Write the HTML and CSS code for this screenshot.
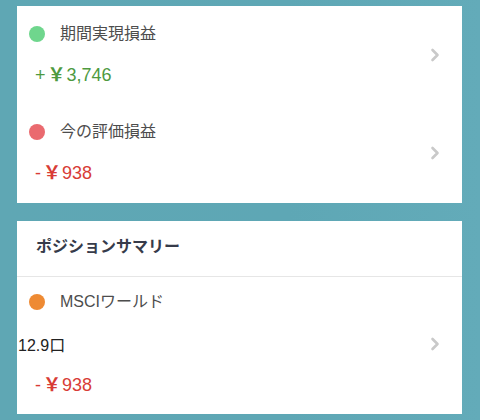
FILE: index.html
```html
<!DOCTYPE html>
<html lang="ja">
<head>
<meta charset="utf-8">
<link rel="stylesheet" href="styles.css">
</head>
<body>
<div class="card card-pl">
  <div class="row">
    <div class="info">
      <div class="label"><span class="dot dot-green"></span><span>期間実現損益</span></div>
      <div class="value plus">+<span class="yen">￥</span>3,746</div>
    </div>
    <svg class="chev" width="10" height="14" viewBox="0 0 10 14"><path d="M2.5 2 L7.5 7 L2.5 12" fill="none" stroke="#c9c9c9" stroke-width="2.6" stroke-linecap="round" stroke-linejoin="round"/></svg>
  </div>
  <div class="row">
    <div class="info">
      <div class="label"><span class="dot dot-red"></span><span>今の評価損益</span></div>
      <div class="value minus">-<span class="yen">￥</span>938</div>
    </div>
    <svg class="chev" width="10" height="14" viewBox="0 0 10 14"><path d="M2.5 2 L7.5 7 L2.5 12" fill="none" stroke="#c9c9c9" stroke-width="2.6" stroke-linecap="round" stroke-linejoin="round"/></svg>
  </div>
</div>
<div class="card card-pos">
  <div class="head">ポジションサマリー</div>
  <div class="row item">
    <div class="info">
      <div class="label"><span class="dot dot-orange"></span><span>MSCIワールド</span></div>
      <div class="qty">12.9口</div>
      <div class="value minus">-<span class="yen">￥</span>938</div>
    </div>
    <svg class="chev" width="10" height="14" viewBox="0 0 10 14"><path d="M2.5 2 L7.5 7 L2.5 12" fill="none" stroke="#c9c9c9" stroke-width="2.6" stroke-linecap="round" stroke-linejoin="round"/></svg>
  </div>
</div>
</body>
</html>
```
FILE: styles.css
```css
html, body {
  margin: 0;
  height: 100%;
}
body {
  background: linear-gradient(90deg, #5fa7b4 0%, #5ea7b5 60%, #63abb9 100%);
  padding: 6px 18px 0 17px;
  box-sizing: border-box;
  font-family: "Liberation Sans", "Noto Sans CJK JP", sans-serif;
  overflow: hidden;
}
.card {
  background: #ffffff;
}
.card-pl {
  padding-bottom: 1px;
}
.card + .card {
  margin-top: 18px;
}
.row {
  display: flex;
  align-items: center;
  padding: 18px 22px 18px 0;
}
.info {
  flex: 1;
  display: flex;
  flex-direction: column;
}
.label {
  display: flex;
  align-items: center;
  gap: 15px;
  padding-left: 12px;
  font-size: 16px;
  line-height: 20px;
  color: #4d4d4d;
}
.dot {
  width: 16px;
  height: 16px;
  border-radius: 50%;
  flex: none;
}
.dot-green { background: #6fd68d; }
.dot-red { background: #ea6a6f; }
.dot-orange { background: #ee8a33; }
.value {
  margin-top: 20px;
  padding-left: 18px;
  font-size: 18px;
  line-height: 22px;
}
.yen {
  font-weight: bold;
  margin: 0 1px 0 2px;
}
.plus { color: #4e9a3f; }
.minus { color: #d83c36; }
.chev {
  flex: none;
}
.head {
  padding: 16px 0 19px 19px;
  font-size: 16px;
  line-height: 20px;
  font-weight: bold;
  color: #363b4a;
  border-bottom: 1px solid #e6e6e6;
}
.item {
  padding-top: 15px;
}
.qty {
  margin-top: 24px;
  padding-left: 1px;
  font-size: 16px;
  line-height: 20px;
  color: #222222;
}
.item .value {
  margin-top: 18px;
}
```
